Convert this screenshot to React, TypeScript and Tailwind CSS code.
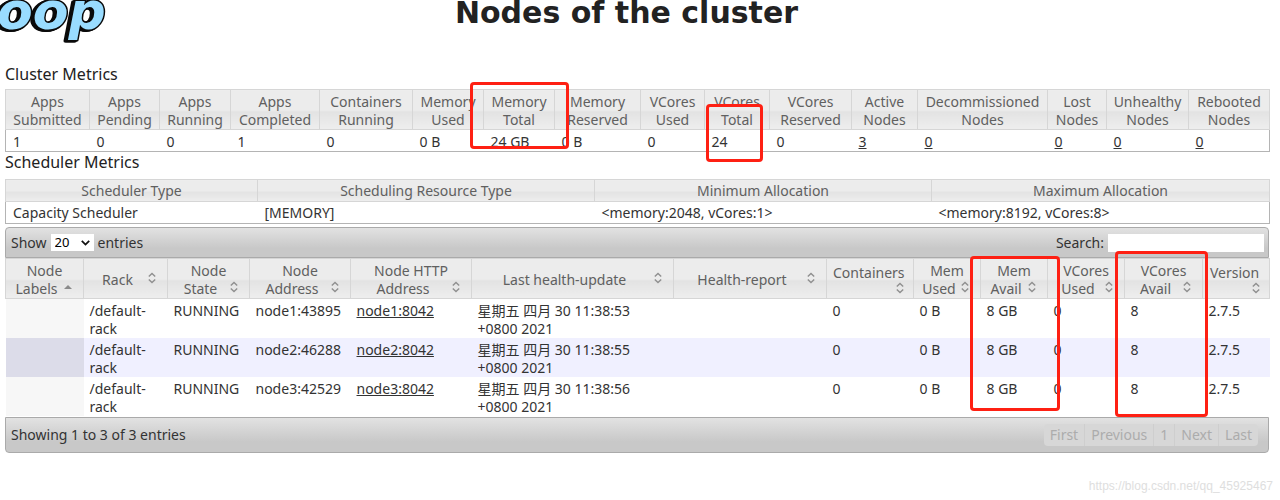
import React from "react";

type Column = { label: string; width: string };

const clusterColumns: (Column & { value: string; link?: boolean })[] = [
  { label: "Apps Submitted", width: "w-[84px]", value: "1" },
  { label: "Apps Pending", width: "w-[70px]", value: "0" },
  { label: "Apps Running", width: "w-[71px]", value: "0" },
  { label: "Apps Completed", width: "w-[89px]", value: "1" },
  { label: "Containers Running", width: "w-[93px]", value: "0" },
  { label: "Memory Used", width: "w-[71px]", value: "0 B" },
  { label: "Memory Total", width: "w-[71px]", value: "24 GB" },
  { label: "Memory Reserved", width: "w-[86px]", value: "0 B" },
  { label: "VCores Used", width: "w-[64px]", value: "0" },
  { label: "VCores Total", width: "w-[65px]", value: "24" },
  { label: "VCores Reserved", width: "w-[82px]", value: "0" },
  { label: "Active Nodes", width: "w-[66px]", value: "3", link: true },
  { label: "Decommissioned Nodes", width: "w-[130px]", value: "0", link: true },
  { label: "Lost Nodes", width: "w-[59px]", value: "0", link: true },
  { label: "Unhealthy Nodes", width: "w-[82px]", value: "0", link: true },
  { label: "Rebooted Nodes", width: "w-[81px]", value: "0", link: true },
];

const schedulerColumns: (Column & { value: string })[] = [
  { label: "Scheduler Type", width: "w-[252px]", value: "Capacity Scheduler" },
  { label: "Scheduling Resource Type", width: "w-[337px]", value: "[MEMORY]" },
  { label: "Minimum Allocation", width: "w-[337px]", value: "<memory:2048, vCores:1>" },
  { label: "Maximum Allocation", width: "w-[338px]", value: "<memory:8192, vCores:8>" },
];

const nodeColumns: { lines: string[]; width: string; drop?: boolean }[] = [
  { lines: ["Node", "Labels"], width: "w-[78px]" },
  { lines: ["Rack"], width: "w-[84px]" },
  { lines: ["Node", "State"], width: "w-[82px]" },
  { lines: ["Node", "Address"], width: "w-[101px]" },
  { lines: ["Node HTTP", "Address"], width: "w-[121px]" },
  { lines: ["Last health-update"], width: "w-[202px]" },
  { lines: ["Health-report"], width: "w-[153px]" },
  { lines: ["Containers"], width: "w-[87px]", drop: true },
  { lines: ["Mem", "Used"], width: "w-[67px]" },
  { lines: ["Mem", "Avail"], width: "w-[67px]" },
  { lines: ["VCores", "Used"], width: "w-[77px]" },
  { lines: ["VCores", "Avail"], width: "w-[78px]" },
  { lines: ["Version"], width: "w-[67px]", drop: true },
];

const nodes = [
  { address: "node1:43895", http: "node1:8042", seconds: "53" },
  { address: "node2:46288", http: "node2:8042", seconds: "55" },
  { address: "node3:42529", http: "node3:8042", seconds: "56" },
];

const headCell =
  "border border-[#d6d6d6] bg-linear-to-b from-[#ececec] from-50% via-[#e3e3e3] via-55% to-[#eeeeee] p-0 text-center font-normal text-[#606060]";
const bar = "flex items-center justify-between border border-[#aaaaaa] bg-linear-to-b from-[#e2e2e2] to-[#c8c8c8] to-70% pl-[5px]";

function SortIcon({ up }: { up?: boolean }) {
  return (
    <svg className="h-3 w-2 shrink-0" viewBox="0 0 8 12" fill="none" stroke="#909090" strokeWidth="1.4" aria-hidden="true">
      {up ? (
        <path d="M0 8 4 4l4 4z" fill="#8a8a8a" stroke="none" />
      ) : (
        <path d="M0.8 4.6 4 1.4l3.2 3.2M0.8 7.4 4 10.6l3.2-3.2" />
      )}
    </svg>
  );
}

function Logo() {
  return (
    <svg className="block h-[44px] w-[110px]" viewBox="0 0 110 44" role="img" aria-label="Hadoop" strokeLinejoin="round">
      <g className="[filter:drop-shadow(-2px_1px_0_#0a0a0a)_drop-shadow(-1px_0_0_#0a0a0a)]">
        <text
          x="-3"
          y="29"
          className="font-['DejaVu_Sans',sans-serif] text-[52px] font-bold italic"
          fill="#99dcff"
          stroke="#0a0a0a"
          strokeWidth="3"
          paintOrder="stroke"
        >
          oop
        </text>
      </g>
    </svg>
  );
}

function Mark({ place }: { place: string }) {
  return <div className={`pointer-events-none absolute rounded-[4px] border-[3px] border-[#fe2013] ${place}`} />;
}

export default function App() {
  return (
    <div className="relative min-h-screen overflow-hidden bg-white pr-[11px] pl-[5px] font-['Noto_Sans','Noto_Sans_CJK_SC',sans-serif] text-[14px] leading-[18px] text-[#333333]">
      <header className="-ml-[5px] grid h-[64px] grid-cols-[110px_1fr_126px] items-start">
        <Logo />
        <h1 className="-mt-[6px] text-center font-['DejaVu_Sans',sans-serif] text-[30px] leading-[38px] font-bold text-[#222222]">
          Nodes of the cluster
        </h1>
      </header>

      <h2 className="h-[25px] text-[16px] leading-[20px] text-[#222222]">Cluster Metrics</h2>
      <table className="w-full table-fixed border-collapse border border-[#b4b4b4]">
        <thead>
          <tr className="h-[40px]">
            {clusterColumns.map((c) => (
              <th key={c.label} scope="col" className={`${headCell} ${c.width} pt-[2px]`}>
                {c.label.split(" ").map((w) => (
                  <span key={w} className="block">{w}</span>
                ))}
              </th>
            ))}
          </tr>
        </thead>
        <tbody>
          <tr className="h-[22px]">
            {clusterColumns.map((c) => (
              <td key={c.label} className="p-0 pt-[2px] pl-[7px]">
                {c.link ? <a href="#nodes" className="underline">{c.value}</a> : c.value}
              </td>
            ))}
          </tr>
        </tbody>
      </table>

      <h2 className="h-[27px] text-[16px] leading-[20px] text-[#222222]">Scheduler Metrics</h2>
      <table className="mb-[3px] w-full table-fixed border-collapse border border-[#b4b4b4]">
        <thead>
          <tr className="h-[22px]">
            {schedulerColumns.map((c) => (
              <th key={c.label} scope="col" className={`${headCell} ${c.width} pt-px`}>{c.label}</th>
            ))}
          </tr>
        </thead>
        <tbody>
          <tr className="h-[22px]">
            {schedulerColumns.map((c) => (
              <td key={c.label} className="p-0 pl-[7px]">{c.value}</td>
            ))}
          </tr>
        </tbody>
      </table>

      <div className={`${bar} h-[31px] rounded-t-[4px] pr-1`}>
        <label className="flex items-center gap-1">
          Show
          <span className="relative">
            <select defaultValue="20" className="block h-[17px] w-[43px] appearance-none bg-white pl-1 text-[13px] leading-[17px] text-black">
              <option>20</option>
              <option>40</option>
              <option>60</option>
            </select>
            <svg className="pointer-events-none absolute top-[6px] right-[4px] h-[6px] w-[9px]" viewBox="0 0 9 6" fill="none" stroke="#111111" strokeWidth="1.8" aria-hidden="true">
              <path d="M0.8 0.9 4.5 4.6 8.2 0.9" />
            </svg>
          </span>
          entries
        </label>
        <label className="flex items-center gap-1">
          Search:
          <input type="text" className="h-[18px] w-[156px] bg-white px-1" />
        </label>
      </div>

      <table id="nodes" className="mb-px w-full table-fixed border-collapse">
        <thead>
          <tr className="h-[40px]">
            {nodeColumns.map((c, i) => (
              <th key={c.lines.join(" ")} scope="col" className={`${headCell} ${c.width} pt-[2px]`}>
                {c.drop ? (
                  <span className="block pr-[9px] pl-[6px]">
                    <span className="block">{c.lines[0]}</span>
                    <span className="flex h-[14px] justify-end"><SortIcon /></span>
                  </span>
                ) : (
                  <>
                    {c.lines.length > 1 && <span className="block">{c.lines[0]}</span>}
                    <span className="grid grid-cols-[1fr_8px] items-center pr-[11px] pl-[3px]">
                      <span className="whitespace-nowrap">{c.lines[c.lines.length - 1]}</span>
                      <span className="flex pb-[3px]"><SortIcon up={i === 0} /></span>
                    </span>
                  </>
                )}
              </th>
            ))}
          </tr>
        </thead>
        <tbody>
          {nodes.map((n, i) => (
            <tr key={n.address} className={`h-[39px] align-top ${i % 2 ? "bg-[#f0f0ff]" : "bg-white"} *:p-0 *:pt-[3px] *:pl-[6px]`}>
              <td className={i % 2 ? "bg-[#dcdce9]" : "bg-[#f7f7f7]"} />
              <td>/default-<br />rack</td>
              <td>RUNNING</td>
              <td>{n.address}</td>
              <td><a href="#node" className="underline">{n.http}</a></td>
              <td>星期五 四月 30 11:38:{n.seconds}<br />+0800 2021</td>
              <td />
              <td>0</td>
              <td>0 B</td>
              <td>8 GB</td>
              <td>0</td>
              <td>8</td>
              <td>2.7.5</td>
            </tr>
          ))}
        </tbody>
      </table>

      <div className={`${bar} h-[36px] rounded-b-[4px] pr-[10px]`}>
        <span>Showing 1 to 3 of 3 entries</span>
        <nav className="flex divide-x divide-[#cecece] overflow-hidden rounded-[4px] bg-[#d7d7d7] text-[#acacac]" aria-label="Pages">
          {["First", "Previous", "1", "Next", "Last"].map((p) => (
            <button key={p} type="button" className="h-[22px] px-[6px]">{p}</button>
          ))}
        </nav>
      </div>

      <Mark place="top-[82px] left-[470px] h-[67px] w-[99px]" />
      <Mark place="top-[104px] left-[706px] h-[58px] w-[57px]" />
      <Mark place="top-[256px] left-[970px] h-[155px] w-[90px]" />
      <Mark place="top-[251px] left-[1115px] h-[166px] w-[93px]" />
      <div className="absolute right-[7px] bottom-[6px] font-['Liberation_Sans',sans-serif] text-[12px] leading-[16px] text-[#dedede]">
        https://blog.csdn.net/qq_45925467
      </div>
    </div>
  );
}
